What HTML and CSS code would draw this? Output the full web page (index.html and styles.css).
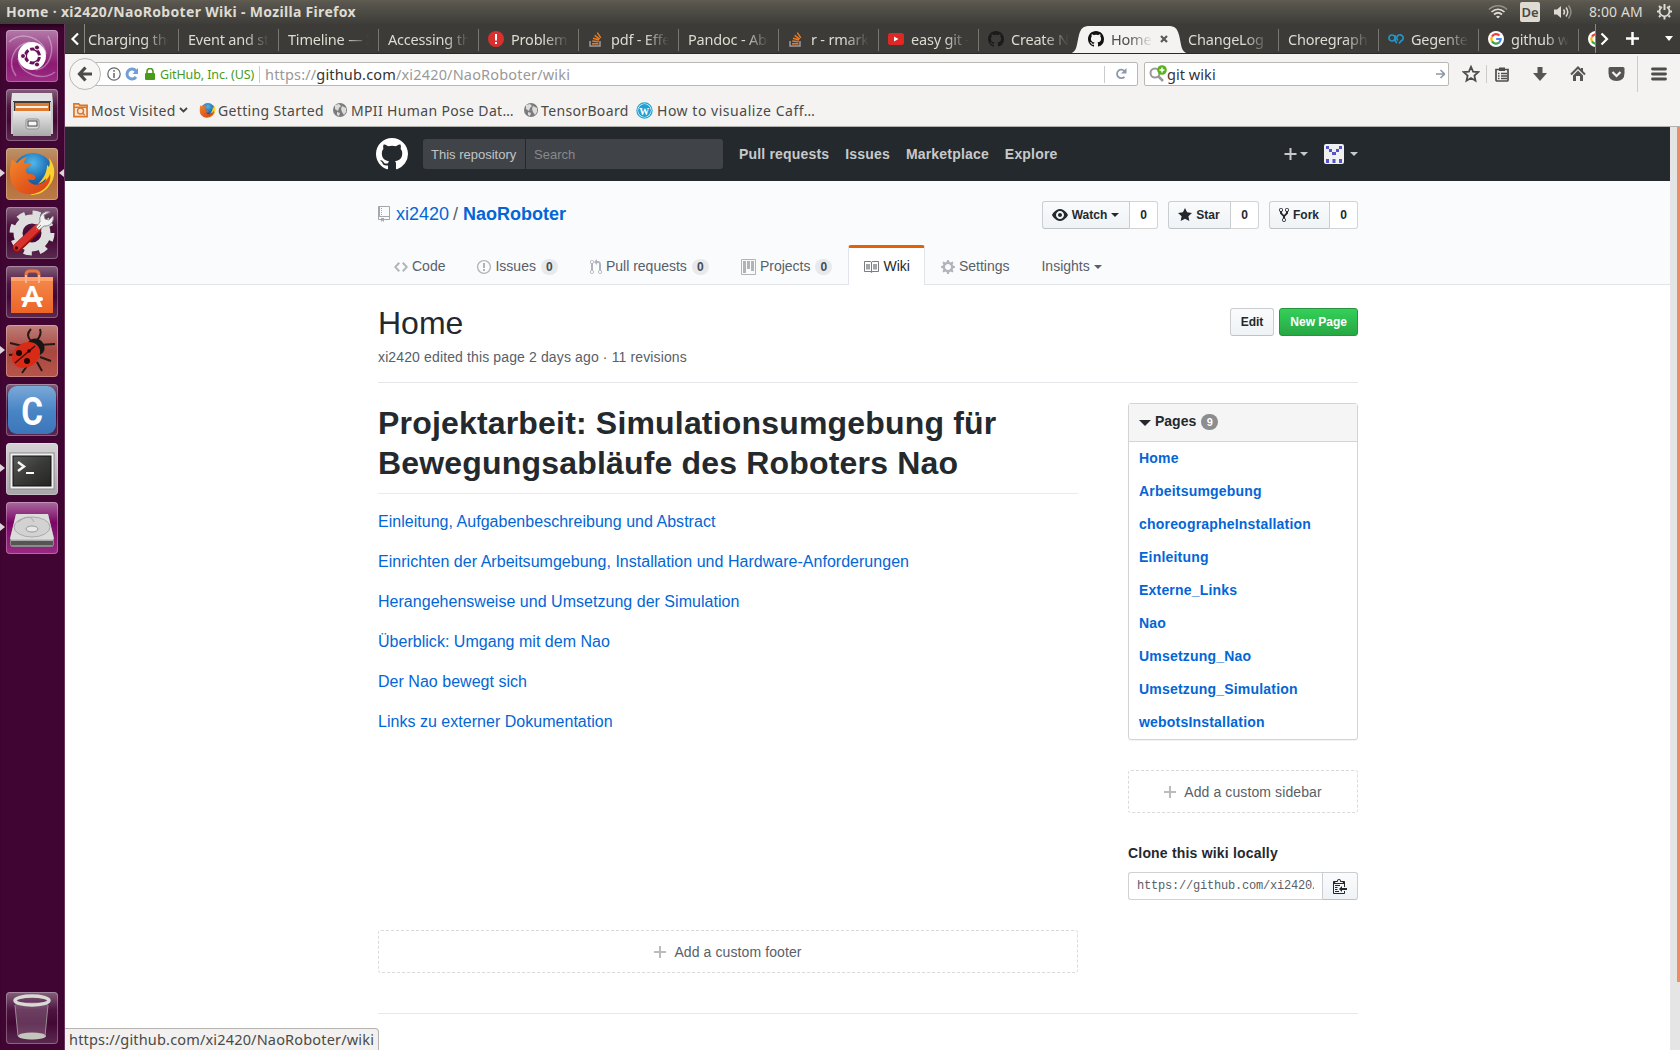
FILE: index.html
```html
<!DOCTYPE html>
<html lang="en">
<head>
<meta charset="utf-8">
<title>Home · xi2420/NaoRoboter Wiki</title>
<link rel="stylesheet" href="styles.css">
</head>
<body>
<svg class="defs" width="0" height="0">
  <defs>
    <linearGradient id="metal" x1="0" y1="0" x2="0" y2="1"><stop offset="0" stop-color="#ececec"/><stop offset="1" stop-color="#a9a9a9"/></linearGradient>
    <linearGradient id="orange" x1="0" y1="0" x2="0" y2="1"><stop offset="0" stop-color="#f58a4e"/><stop offset="1" stop-color="#ec6525"/></linearGradient>
    <linearGradient id="blue" x1="0" y1="0" x2="0" y2="1"><stop offset="0" stop-color="#7ba9d8"/><stop offset=".5" stop-color="#4a86c6"/><stop offset="1" stop-color="#3a76b9"/></linearGradient>
    <linearGradient id="screen" x1="0" y1="0" x2="1" y2="1"><stop offset="0" stop-color="#5a5b58"/><stop offset=".5" stop-color="#3a3b38"/><stop offset="1" stop-color="#242422"/></linearGradient>
    <radialGradient id="globe" cx=".5" cy=".25" r=".7"><stop offset="0" stop-color="#4fb9ea"/><stop offset=".6" stop-color="#1b68b0"/><stop offset="1" stop-color="#153f7c"/></radialGradient>
    <linearGradient id="fox" x1="0" y1="0" x2="1" y2="1"><stop offset="0" stop-color="#f08a2c"/><stop offset=".6" stop-color="#e4571b"/><stop offset="1" stop-color="#d8401a"/></linearGradient>
    <symbol id="octocat" viewBox="0 0 16 16"><path d="M8 0C3.58 0 0 3.58 0 8c0 3.54 2.29 6.53 5.47 7.59.4.07.55-.17.55-.38 0-.19-.01-.82-.01-1.49-2.01.37-2.53-.49-2.69-.94-.09-.23-.48-.94-.82-1.13-.28-.15-.68-.52-.01-.53.63-.01 1.08.58 1.23.82.72 1.21 1.87.87 2.33.66.07-.52.28-.87.51-1.07-1.78-.2-3.64-.89-3.64-3.95 0-.87.31-1.59.82-2.15-.08-.2-.36-1.02.08-2.12 0 0 .67-.21 2.2.82.64-.18 1.32-.27 2-.27.68 0 1.36.09 2 .27 1.53-1.04 2.2-.82 2.2-.82.44 1.1.16 1.92.08 2.12.51.56.82 1.27.82 2.15 0 3.07-1.87 3.75-3.65 3.95.29.25.54.73.54 1.48 0 1.07-.01 1.93-.01 2.2 0 .21.15.46.55.38A8.013 8.013 0 0 0 16 8c0-4.42-3.58-8-8-8z"/></symbol>
    <symbol id="firefox" viewBox="0 0 48 48"><circle cx="25" cy="23" r="20" fill="url(#globe)"/><path d="M41 8c7 8 7 20 0 28-5 7-12 9-19 9 10-4 15-9 16-17-2 3-5 5-8 6 6-6 9-12 9-19l2 2c1-3 1-6 0-9z" fill="#f9d22e"/><path d="M4 9c1 1 3 3 5 4 3-3 7-6 11-6-3 2-4 4-4 6 3 1 6 0 7 1 0 2-5 3-5 6 0 2 1 4 3 4 4 0 8 2 6 5-2 2-5 0-7 1 3 5 9 6 14 3 4-2 7-6 8-9 1 4 0 9-4 13-8 9-24 10-32 0C1 31 1 19 4 9z" fill="url(#fox)"/></symbol>
    <symbol id="stack" viewBox="0 0 16 16"><path d="M2 10v5h10v-5" fill="none" stroke="#9a9b9e" stroke-width="1.500"/><path d="M4 12.700h6.500M4.200 10l6.300.7M5 7.200l6 1.800M6.700 4.300l5 3.800M9.300 1.700l3.500 5.200" stroke="#f0791f" stroke-width="1.500"/></symbol>
    <symbol id="world" viewBox="0 0 16 16"><circle cx="8" cy="8" r="7" fill="#7c7c7c"/><path d="M3 3l4-1 2 2-2 2-1 3-3-2zM10 4l4 2v4l-2 3-2-3-1-3zM5 10l3 1-1 3-2-1z" fill="#dcdcdc"/></symbol>
    <symbol id="google" viewBox="0 0 16 16"><circle cx="8" cy="8" r="8" fill="#fff"/><g fill="none" stroke-width="2.200"><path d="M11.500 4.600A4.700 4.700 0 0 0 4 5.600" stroke="#ea4335"/><path d="M4 5.600a4.700 4.700 0 0 0 0 4.800" stroke="#fbbc05"/><path d="M4 10.400a4.700 4.700 0 0 0 7 1.200" stroke="#34a853"/><path d="M11 11.600A4.700 4.700 0 0 0 12.700 8H8.200" stroke="#4285f4"/></g></symbol>
  </defs>
</svg>

<header class="panel">
  <span class="panel-title">Home · xi2420/NaoRoboter Wiki - Mozilla Firefox</span>
  <div class="indicators">
    <svg class="wifi" width="20" height="16" viewBox="0 0 20 16" fill="none" stroke="#dfdbd2" stroke-width="1.700"><path d="M1 5.500c5-5 13-5 18 0" opacity=".45"/><path d="M3.500 8c4-3.700 9-3.700 13 0M6 10.500c2.500-2.200 5.500-2.200 8 0"/><path d="M8 12.500q2-1.500 4 0l-2 2z" fill="#dfdbd2" stroke="none"/></svg>
    <span class="lang">De</span>
    <svg class="sound" width="20" height="16" viewBox="0 0 20 16" fill="none" stroke="#dfdbd2" stroke-width="1.500"><path d="M1 5.500h3l4-3.500v12l-4-3.500H1z" fill="#dfdbd2" stroke="none"/><path d="M10.500 5.500q2 2.500 0 5M13 3.500q3.500 4.500 0 9"/><path d="M15.500 1.500q5 6.500 0 13" opacity=".45"/></svg>
    <span class="clock">8:00 AM</span>
    <svg class="power" width="17" height="17" viewBox="0 0 17 17" fill="none" stroke="#dfdbd2"><path d="M6 4a5 5 0 1 0 5 0" stroke-width="1.800"/><path d="M8.500 1v6" stroke-width="2"/><path d="M1 8.500h2M14 8.500h2M3 14l1.500-1.500M14 14l-1.500-1.500M8.500 14v2.500M3 3l1.500 1.500M14 3l-1.500 1.500" stroke-width="2"/></svg>
  </div>
</header>

<div class="desktop">
<nav class="launcher">
  <div class="tile dash"><svg viewBox="0 0 52 52"><g fill="none" stroke="#fff" opacity=".35" stroke-width="1.500"><path d="M3 12C16 0 38 8 40 24M49 42C36 52 14 44 12 28M10 46C0 32 8 14 24 12M42 6c8 14 2 32-12 34"/></g><circle cx="26" cy="26" r="14" fill="#fff"/><circle cx="26.500" cy="26" r="7" fill="none" stroke="#6b1157" stroke-width="3" stroke-dasharray="12.700 2" stroke-dashoffset="-1"/><g fill="#6b1157" stroke="#fff"><circle cx="17" cy="26" r="2.500"/><circle cx="31" cy="17.500" r="2.500"/><circle cx="31" cy="34.500" r="2.500"/></g></svg></div>
  <div class="tile glass"><svg viewBox="0 0 52 52"><path d="M6 4h40l1 10H5z" fill="#e2e2e2"/><path d="M7 12h38v14H7z" fill="#3f3b38"/><path d="M9 14h34v8H9z" fill="#e07a33"/><path d="M10 17h32v2H10z" fill="#fff0e2"/><path d="M5 13h3v32H5zM44 13h3v32h-3z" fill="#c8c8c8"/><path d="M7 22h38v25H7z" fill="url(#metal)"/><rect x="20" y="30" width="13" height="10" rx="2" fill="#ddd" stroke="#929292"/><rect x="22" y="32" width="9" height="5" fill="#f6f6f6" stroke="#444"/></svg></div>
  <div class="tile firefox running focused"><svg viewBox="0 0 52 52"><use href="#firefox" x="2" y="2" width="48" height="48"/></svg></div>
  <div class="tile glass"><svg viewBox="0 0 52 52"><circle cx="26" cy="26" r="20" fill="none" stroke="#dedede" stroke-width="5" stroke-dasharray="8 7.700"/><circle cx="26" cy="26" r="14" fill="none" stroke="#dedede" stroke-width="9"/><path d="M11 41L31 22" stroke="#8f1512" stroke-width="9" stroke-linecap="round"/><path d="M11 40L31 21" stroke="#d8302a" stroke-width="7" stroke-linecap="round"/><path d="M30 23l5-5M44 5a8 8 0 0 0-10 10l-4 5 3 3 5-4a8 8 0 0 0 9-10l-4 4-4-1-1-4z" stroke="#8c8c8c" stroke-width="1" fill="#f2f2f2"/><circle cx="10.500" cy="41" r="1.700" fill="#4a0808"/></svg></div>
  <div class="tile glass"><svg viewBox="0 0 52 52"><path d="M20 17V9q0-4 4-4h5q4 0 4 4v8" fill="none" stroke="#e97840" stroke-width="3"/><path d="M5 11h42v36H5z" fill="url(#orange)"/><path d="M5 11h42v4H5z" fill="#ffa26b"/><path d="M20 17V9M33 17V9" stroke="#f7b48f" stroke-width="2"/><text x="26" y="41" class="bag-letter">A</text><path d="M17 33h18" stroke="#fff" stroke-width="4" stroke-linecap="round"/></svg></div>
  <div class="tile bug running"><svg viewBox="0 0 52 52"><g fill="none" stroke="#261815" stroke-width="2"><path d="M4 18q8 2 13 3M3 30l10-1M16 48l5-7M36 46l-5-9M34 32l11 4M33 20l16-1M25 16q-6-6 0-12M31 15q5-5 3-11"/></g><ellipse cx="30" cy="22" rx="9" ry="8" transform="rotate(40 30 22)" fill="#161616"/><ellipse cx="20" cy="30" rx="15" ry="12" transform="rotate(-35 20 30)" fill="#d92a17"/><path d="M9 38L29 21" stroke="#420a05" stroke-width="1.500"/><g fill="#1d0704"><circle cx="13" cy="28" r="3"/><circle cx="21" cy="36" r="3"/><circle cx="23" cy="26" r="1.700"/></g></svg></div>
  <div class="tile glass"><svg viewBox="0 0 52 52"><rect x="2" y="2" width="48" height="48" rx="9" fill="url(#blue)"/><text x="26" y="41" class="c-letter">C</text></svg></div>
  <div class="tile term running"><svg viewBox="0 0 52 52"><rect x="4" y="10" width="44" height="36" fill="#f2f2f2" stroke="#8a8a8a"/><rect x="7" y="13" width="38" height="30" fill="url(#screen)" stroke="#111"/><path d="M12 19l6 4.500-6 4.500" fill="none" stroke="#f4f4f4" stroke-width="2.500"/><path d="M20 30h8" stroke="#fff" stroke-width="2"/></svg></div>
  <div class="tile disk running"><svg viewBox="0 0 52 52"><path d="M10 12h32l6 24v6q0 3-3 3H7q-3 0-3-3v-6z" fill="#8b8b8b"/><path d="M10 12h32l6 25H4z" fill="#dcdcdc"/><path d="M5 38h42v5H5z" fill="#555"/><path d="M5 38h42" stroke="#fff"/><ellipse cx="26" cy="25" rx="18" ry="10" fill="#d2d2d2" stroke="#aaa"/><path d="M12 20q12-10 16 0" fill="none" stroke="#aaa"/><ellipse cx="26" cy="27" rx="6" ry="3" fill="#e8e8e8" stroke="#999"/></svg></div>
  <div class="tile glass trash"><svg viewBox="0 0 52 52"><path d="M9 10l3 35q14 5 27 0l3-35z" fill="#fff" opacity=".18"/><ellipse cx="26" cy="44" rx="14" ry="3.500" fill="#c4c6bd"/><path d="M9 13l3 31M42 13l-3 31" stroke="#9d8b98" stroke-width="1"/><ellipse cx="26" cy="8.500" rx="17" ry="4.500" fill="none" stroke="#d9dad6" stroke-width="3.500"/></svg></div>
</nav>

<main class="window">
  <div class="tabbar">
    <div class="scroll-left"><svg width="10" height="14" viewBox="0 0 10 14"><path d="M8 1.500L2.500 7 8 12.500" fill="none" stroke="#fff" stroke-width="2.200"/></svg></div>
    <div class="tabs">
      <div class="tab first"><span>Charging the</span></div>
      <div class="tab"><span>Event and sta</span></div>
      <div class="tab"><span>Timeline — In</span></div>
      <div class="tab"><span>Accessing the</span></div>
      <div class="tab"><svg width="16" height="16" viewBox="0 0 16 16"><circle cx="8" cy="8" r="8" fill="#d9302f"/><path d="M8 3v6.500M8 11v2" stroke="#fff" stroke-width="2"/></svg><span>Problem</span></div>
      <div class="tab"><svg width="16" height="16"><use href="#stack"/></svg><span>pdf - Effe</span></div>
      <div class="tab"><span>Pandoc - Abo</span></div>
      <div class="tab"><svg width="16" height="16"><use href="#stack"/></svg><span>r - rmarkd</span></div>
      <div class="tab"><svg width="16" height="16" viewBox="0 0 16 16"><rect y="2" width="16" height="12" rx="2.500" fill="#dd2825"/><path d="M6 5.500v5L10.500 8z" fill="#fff"/></svg><span>easy git -</span></div>
      <div class="tab nosep"><svg width="16" height="16" fill="#1b1b1b"><use href="#octocat"/></svg><span>Create N</span></div>
      <div class="tab active"><svg class="tabshape" width="126" height="29" viewBox="0 0 126 29"><path d="M0 29C12 29 10 21 13 10 15 3 17 1 24 1h78c7 0 9 2 11 9 3 11 1 19 13 19z" fill="#f4f3f1"/></svg><svg class="icon" width="16" height="16" fill="#111"><use href="#octocat"/></svg><span>Home</span><svg class="close" width="8" height="8" viewBox="0 0 8 8"><path d="M1 1l6 6M7 1L1 7" stroke="#5a5a58" stroke-width="2.200"/></svg></div>
      <div class="tab after"><span>ChangeLog</span></div>
      <div class="tab"><span>Choregraph</span></div>
      <div class="tab"><svg width="16" height="16" viewBox="0 0 16 16" fill="none" stroke="#2196c9" stroke-width="1.700"><circle cx="4" cy="7" r="3"/><path d="M7 4v4q0 3 2 4M10 9.500a3.200 3.200 0 1 1 3 .5l-2 2.500"/></svg><span>Gegente</span></div>
      <div class="tab"><svg width="16" height="16"><use href="#google"/></svg><span>github w</span></div>
      <div class="tab cut"><svg width="16" height="16"><use href="#google"/></svg></div>
    </div>
    <div class="tab-tools">
      <svg width="9" height="14" viewBox="0 0 9 14"><path d="M1.500 1.500L7 7l-5.500 5.500" fill="none" stroke="#fff" stroke-width="2.200"/></svg>
      <svg width="13" height="13" viewBox="0 0 13 13"><path d="M6.500 0v13M0 6.500h13" stroke="#fff" stroke-width="2.500"/></svg>
      <svg width="8" height="5" viewBox="0 0 8 5"><path d="M0 0h8L4 5z" fill="#fff"/></svg>
    </div>
  </div>

  <div class="navbar">
    <div class="back"><svg width="16" height="16" viewBox="0 0 16 16"><path d="M8.500 1.500L2.500 8l6 6.500M3 8h12" fill="none" stroke="#4a4a48" stroke-width="3.200"/></svg></div>
    <div class="urlbar">
      <svg width="14" height="14" viewBox="0 0 14 14"><circle cx="7" cy="7" r="6.200" fill="none" stroke="#666" stroke-width="1.200"/><path d="M7 6v5M7 3v1.800" stroke="#666" stroke-width="1.500"/></svg>
      <svg class="noscript" width="14" height="14" viewBox="0 0 14 14"><path d="M11 10a5 5 0 1 1 0-6" fill="none" stroke="#6f9fd6" stroke-width="3"/><path d="M13 1v6H7.500z" fill="#6f9fd6"/></svg>
      <svg class="lock" width="10" height="12" viewBox="0 0 10 12"><rect y="5" width="10" height="7" rx="1" fill="#4a9a1c"/><path d="M2 5V3.500a3 3 0 0 1 6 0V5" fill="none" stroke="#4a9a1c" stroke-width="1.600"/></svg>
      <span class="ident">GitHub, Inc. (US)</span>
      <span class="url">https://<b>github.com</b>/xi2420/NaoRoboter/wiki</span>
      <span class="reload"><svg width="12" height="12" viewBox="0 0 12 12"><path d="M9.500 8.800A4.300 4.300 0 1 1 9.500 3" fill="none" stroke="#8d99a8" stroke-width="1.800"/><path d="M11.500 0v5.500H6z" fill="#8d99a8"/></svg></span>
    </div>
    <div class="searchbar">
      <svg width="18" height="18" viewBox="0 0 18 18"><circle cx="6" cy="8" r="4.500" fill="none" stroke="#999" stroke-width="2"/><path d="M9 11l5 5" stroke="#999" stroke-width="2.500"/><circle cx="13" cy="5" r="4.800" fill="#57b31b"/><path d="M13 2.500v5M10.500 5h5" stroke="#fff" stroke-width="1.500"/></svg>
      <span>git wiki</span>
      <svg width="9" height="10" viewBox="0 0 9 10"><path d="M0 5h8M4.500 1l4 4-4 4" fill="none" stroke="#8d99a8" stroke-width="1.600"/></svg>
    </div>
    <div class="toolbar">
      <svg width="18" height="18" viewBox="0 0 18 18"><path d="M9 1.800l2.100 4.800 5.200.5-3.900 3.500 1.100 5.100L9 13l-4.500 2.700 1.100-5.100L1.700 7.100l5.200-.5z" fill="none" stroke="#4d4d4b" stroke-width="1.800"/></svg>
      <i></i>
      <svg width="16" height="16" viewBox="0 0 16 16"><path d="M2 3.500h12V14q0 1-1 1H3q-1 0-1-1z" fill="none" stroke="#4d4d4b" stroke-width="1.700"/><path d="M5 1.500h6V5H5z" fill="#4d4d4b"/><path d="M4 7.500h1.500M7 7.500h6M4 10h1.500M7 10h6M4 12.500h1.500M7 12.500h6" stroke="#4d4d4b" stroke-width="1.300"/></svg>
      <svg width="16" height="16" viewBox="0 0 16 16"><path d="M5.500 1h5v6H15l-7 8-7-8h4.500z" fill="#555553"/></svg>
      <svg width="16" height="16" viewBox="0 0 16 16"><path d="M1 8.500l7-7 7 7" fill="none" stroke="#555553" stroke-width="2"/><path d="M11 2h2v4l-2-2zM3 9.500l5-5 5 5V15h-3v-5H6v5H3z" fill="#555553"/></svg>
      <svg width="17" height="16" viewBox="0 0 17 16"><path d="M2 1h13q1.500 0 1.500 1.500V7q0 8-8 8t-8-8V2.500Q.5 1 2 1z" fill="#555553"/><path d="M4.500 6l4 4 4-4" fill="none" stroke="#f4f3f1" stroke-width="2.200"/></svg>
      <i class="tall"></i>
      <svg width="16" height="14" viewBox="0 0 16 14"><path d="M1.500 2h13M1.500 7h13M1.500 12h13" stroke="#4d4d4b" stroke-width="2.800" stroke-linecap="round"/></svg>
    </div>
  </div>

  <div class="bookmarks">
    <a class="b1"><svg width="15" height="16" viewBox="0 0 16 16" fill="none" stroke="#d9762b"><path d="M1 3V1.500h5L7.500 3H15v12H1z" stroke-width="1.800" fill="#f7e6d5"/><circle cx="8" cy="9" r="3.200" stroke-width="1.500"/><path d="M10 11l2.500 2.500M1 5h14" stroke-width="1.500"/></svg><span>Most Visited</span><svg width="9" height="6" viewBox="0 0 9 6"><path d="M1 1l3.500 3.500L8 1" fill="none" stroke="#444" stroke-width="1.800"/></svg></a>
    <a class="b2"><svg width="17" height="17"><use href="#firefox"/></svg><span>Getting Started</span></a>
    <a class="b3"><svg width="16" height="16"><use href="#world"/></svg><span>MPII Human Pose Dat…</span></a>
    <a class="b4"><svg width="16" height="16"><use href="#world"/></svg><span>TensorBoard</span></a>
    <a class="b5"><svg width="17" height="17" viewBox="0 0 17 17"><circle cx="8.500" cy="8.500" r="7.600" fill="#fff" stroke="#21a0d2" stroke-width="1.200"/><circle cx="8.500" cy="8.500" r="6.400" fill="#21a0d2"/><text x="8.500" y="12.700" class="wp">W</text></svg><span>How to visualize Caff…</span></a>
  </div>

  <div class="viewport">
    <div class="page">
      <div class="gh-header"><div class="container gh-bar">
        <svg width="32" height="32" fill="#fff"><use href="#octocat"/></svg>
        <div class="gh-search"><span>This repository</span><em>Search</em></div>
        <nav><a>Pull requests</a><a>Issues</a><a>Marketplace</a><a>Explore</a></nav>
        <div class="gh-user">
          <svg class="plus" width="13" height="16" viewBox="0 0 13 16"><path d="M6.500 2v12M.5 8h12" stroke="#c8c9ca" stroke-width="2"/></svg><i class="caret"></i>
          <svg class="avatar" width="20" height="20" viewBox="0 0 20 20"><rect width="20" height="20" rx="2" fill="#f0f0f0"/><path d="M2 2h3v3H2zM15 2h3v3h-3zM5 5h3v3H5zM12 5h3v3h-3zM8 8h4v3H8zM2 15h3v4H2zM8.500 15h3v4h-3zM15 15h3v4h-3z" fill="#5254cd"/></svg><i class="caret"></i>
        </div>
      </div></div>

      <div class="repohead">
        <div class="container title-row">
          <h1 class="repo"><svg width="12" height="16" viewBox="0 0 12 16"><path d="M4 9H3V8h1v1zm0-3H3v1h1V6zm0-2H3v1h1V4zm0-2H3v1h1V2zm8-1v12c0 .55-.45 1-1 1H6v2l-1.500-1.500L3 16v-2H1c-.55 0-1-.45-1-1V1c0-.55.45-1 1-1h10c.55 0 1 .45 1 1zm-1 10H1v2h2v-1h3v1h5v-2zm0-10H2v9h9V1z"/></svg><a>xi2420</a><s>/</s><a class="strong">NaoRoboter</a></h1>
          <div class="actions">
            <div class="group"><span class="btn w1"><svg width="16" height="16" viewBox="0 0 16 16"><path d="M8.060 2C3 2 0 8 0 8s3 6 8.060 6C13 14 16 8 16 8s-3-6-7.940-6zM8 12c-2.200 0-4-1.780-4-4 0-2.200 1.800-4 4-4 2.220 0 4 1.800 4 4 0 2.220-1.780 4-4 4zm2-4c0 1.110-.89 2-2 2-1.110 0-2-.89-2-2 0-1.110.89-2 2-2 1.110 0 2 .89 2 2z"/></svg>Watch<i class="caret"></i></span><span class="count">0</span></div>
            <div class="group"><span class="btn w2"><svg width="14" height="16" viewBox="0 0 14 16"><path d="M14 6l-4.900-.64L7 1 4.900 5.360 0 6l3.600 3.260L2.670 14 7 11.670 11.330 14l-.93-4.740z"/></svg>Star</span><span class="count">0</span></div>
            <div class="group"><span class="btn w3"><svg width="10" height="16" viewBox="0 0 10 16"><path d="M8 1a1.993 1.993 0 0 0-1 3.720V6L5 8 3 6V4.720A1.993 1.993 0 0 0 2 1a1.993 1.993 0 0 0-1 3.720V6.500l3 3v1.780A1.993 1.993 0 0 0 5 15a1.993 1.993 0 0 0 1-3.720V9.500l3-3V4.720A1.993 1.993 0 0 0 8 1zM2 4.200C1.340 4.200.8 3.650.8 3c0-.65.55-1.200 1.200-1.200.65 0 1.200.55 1.200 1.200 0 .65-.55 1.200-1.200 1.200zm3 10c-.66 0-1.200-.55-1.200-1.200 0-.65.55-1.200 1.200-1.200.65 0 1.200.55 1.200 1.200 0 .65-.55 1.200-1.200 1.200zm3-10c-.66 0-1.200-.55-1.200-1.200 0-.65.55-1.200 1.200-1.200.65 0 1.200.55 1.200 1.200 0 .65-.55 1.200-1.200 1.200z"/></svg>Fork</span><span class="count">0</span></div>
          </div>
        </div>
        <div class="container reponav">
          <a><svg width="14" height="16" viewBox="0 0 14 16"><path d="M9.500 3L8 4.500 11.500 8 8 11.500 9.500 13 14 8 9.500 3zm-5 0L0 8l4.500 5L6 11.500 2.500 8 6 4.500 4.500 3z"/></svg>Code</a>
          <a><svg width="14" height="16" viewBox="0 0 14 16"><path d="M7 2.300c3.140 0 5.700 2.560 5.700 5.700s-2.560 5.700-5.700 5.700A5.710 5.710 0 0 1 1.300 8c0-3.140 2.560-5.700 5.700-5.700zM7 1C3.140 1 0 4.140 0 8s3.140 7 7 7 7-3.140 7-7-3.140-7-7-7zm1 3H6v5h2V4zm0 6H6v2h2v-2z"/></svg>Issues<b>0</b></a>
          <a><svg width="12" height="16" viewBox="0 0 12 16"><path d="M11 11.280V5c-.03-.78-.34-1.470-.94-2.060C9.460 2.350 8.780 2.030 8 2H7V0L4 3l3 3V4h1c.27.02.48.11.69.31.21.2.3.42.31.69v6.280A1.993 1.993 0 0 0 10 15a1.993 1.993 0 0 0 1-3.720zm-1 2.920c-.66 0-1.200-.55-1.200-1.200 0-.65.55-1.200 1.200-1.200.65 0 1.200.55 1.200 1.200 0 .65-.55 1.200-1.200 1.200zM4 3c0-1.110-.89-2-2-2a1.993 1.993 0 0 0-1 3.720v6.560A1.993 1.993 0 0 0 2 15a1.993 1.993 0 0 0 1-3.720V4.720c.59-.34 1-.98 1-1.720zm-.8 10c0 .66-.55 1.200-1.200 1.200-.65 0-1.200-.55-1.200-1.200 0-.65.55-1.200 1.200-1.200.65 0 1.200.55 1.200 1.200zM2 4.200C1.340 4.200.8 3.650.8 3c0-.65.55-1.200 1.200-1.200.65 0 1.200.55 1.200 1.200 0 .65-.55 1.200-1.200 1.200z"/></svg>Pull requests<b>0</b></a>
          <a><svg width="15" height="16" viewBox="0 0 15 16"><path fill-rule="evenodd" d="M1 0h13a1 1 0 0 1 1 1v14a1 1 0 0 1-1 1H1a1 1 0 0 1-1-1V1a1 1 0 0 1 1-1zM1 1v14h13V1z"/><path d="M10 12h3V2h-3zM6 10h3V2H6zM2 14h3V2H2z"/></svg>Projects<b>0</b></a>
          <a class="selected"><svg width="16" height="16" viewBox="0 0 16 16"><path opacity=".7" d="M3 5h4v5.500H3zM10 5h4v5.500h-4z"/><path d="M16 3v9c0 .55-.45 1-1 1H9.500l-1 1-1-1H2c-.55 0-1-.45-1-1V3c0-.55.45-1 1-1h5.500l1 1 1-1H15c.55 0 1 .45 1 1zm-8 .5L7.500 3H2v9h6V3.500zm7-.5H9.500l-.5.5V12h6V3z"/></svg>Wiki</a>
          <a><svg width="14" height="16" viewBox="0 0 14 16"><path d="M14 8.770v-1.600l-1.940-.64-.45-1.090.88-1.840-1.130-1.130-1.810.91-1.090-.45-.69-1.920h-1.600l-.63 1.940-1.110.45-1.840-.88-1.130 1.130.91 1.810-.45 1.090L0 7.230v1.590l1.940.64.45 1.090-.88 1.840 1.130 1.130 1.810-.91 1.090.45.69 1.920h1.590l.63-1.940 1.110-.45 1.840.88 1.130-1.130-.92-1.810.47-1.090L14 8.750v.02zM7 11c-1.660 0-3-1.340-3-3s1.340-3 3-3 3 1.340 3 3-1.340 3-3 3z"/></svg>Settings</a>
          <a>Insights<i class="caret"></i></a>
        </div>
      </div>

      <div class="container wiki">
        <div class="wiki-head">
          <div><h1>Home</h1><p>xi2420 edited this page 2 days ago · 11 revisions</p></div>
          <div class="wiki-actions"><span class="btn">Edit</span><span class="btn primary">New Page</span></div>
        </div>
        <div class="wiki-cols">
          <div class="wiki-main">
            <article>
              <h1>Projektarbeit: Simulationsumgebung für Bewegungsabläufe des Roboters Nao</h1>
              <p><a>Einleitung, Aufgabenbeschreibung und Abstract</a></p>
              <p><a>Einrichten der Arbeitsumgebung, Installation und Hardware-Anforderungen</a></p>
              <p><a>Herangehensweise und Umsetzung der Simulation</a></p>
              <p><a>Überblick: Umgang mit dem Nao</a></p>
              <p><a>Der Nao bewegt sich</a></p>
              <p><a>Links zu externer Dokumentation</a></p>
            </article>
            <div class="add"><svg width="12" height="16" viewBox="0 0 12 16"><path d="M12 9H7v5H5V9H0V7h5V2h2v5h5z"/></svg>Add a custom footer</div>
          </div>
          <aside>
            <div class="pages">
              <h3><i></i>Pages<b>9</b></h3>
              <ul><li>Home</li><li>Arbeitsumgebung</li><li>choreographeInstallation</li><li>Einleitung</li><li>Externe_Links</li><li>Nao</li><li>Umsetzung_Nao</li><li>Umsetzung_Simulation</li><li>webotsInstallation</li></ul>
            </div>
            <div class="add"><svg width="12" height="16" viewBox="0 0 12 16"><path d="M12 9H7v5H5V9H0V7h5V2h2v5h5z"/></svg>Add a custom sidebar</div>
            <h4>Clone this wiki locally</h4>
            <div class="clone"><span><em>https://github.com/xi2420/NaoRoboter.wiki.git</em></span><div class="btn"><svg width="14" height="16" viewBox="0 0 14 16"><path d="M2 13h4v1H2v-1zm5-6H2v1h5V7zm2 3V8l-3 3 3 3v-2h5v-2H9zM4.500 9H2v1h2.500V9zM2 12h2.500v-1H2v1zm9 1h1v2c-.02.28-.11.52-.3.7-.19.18-.42.28-.7.3H1c-.55 0-1-.45-1-1V4c0-.55.45-1 1-1h3c0-1.110.89-2 2-2 1.110 0 2 .89 2 2h3c.55 0 1 .45 1 1v5h-1V6H1v9h10v-2zM2 5h8c0-.55-.45-1-1-1H8c-.55 0-1-.45-1-1s-.45-1-1-1-1 .45-1 1-.45 1-1 1H3c-.55 0-1 .45-1 1z"/></svg></div></div>
          </aside>
        </div>
        <div class="page-rule"></div>
      </div>
    </div>
    <div class="scrollbar"><div></div></div>
    <div class="status">https://github.com/xi2420/NaoRoboter/wiki</div>
  </div>
</main>
</div>
</body>
</html>
```

FILE: styles.css
```css
* { box-sizing: border-box; }
body { margin: 0; width: 1680px; height: 1050px; overflow: hidden; font-family: "Liberation Sans", Arial, sans-serif; font-size: 14px; line-height: 21px; color: #24292e; background: #fff; }
svg { display: block; flex: none; }
.defs { position: absolute; }
h1, h3, h4, p, ul { margin: 0; padding: 0; font-weight: normal; }
i, em { font-style: normal; }
.panel, .tabbar, .navbar, .bookmarks, .status { font-family: "Noto Sans", "Open Sans", sans-serif; white-space: nowrap; }

/* Top panel */
.panel { height: 24px; display: flex; align-items: center; justify-content: space-between; padding: 0 7px 1px 6px; background: linear-gradient(#615e4f 0, #59574f 2px, #3e3d39); color: #dfdbd2; }
.panel-title { font-weight: 700; font-size: 14px; letter-spacing: .32px; }
.indicators { display: flex; align-items: center; font-size: 14px; }
.lang { width: 20px; height: 20px; margin: 0 13px 0 12px; border-radius: 2px; background: #dfdbd2; color: #4b4a45; font-size: 13px; font-weight: 600; line-height: 20px; text-align: center; }
.clock { width: 54px; margin: 0 13px 0 16px; letter-spacing: .1px; }

/* Launcher */
.desktop { display: flex; height: 1026px; }
.launcher { flex: none; width: 65px; padding: 6px 0 6px 6px; display: flex; flex-direction: column; gap: 7px; background: #400532; border-right: 1px solid #6b3560; box-shadow: inset 0 5px 4px -3px #20021a; }
.tile { position: relative; flex: none; width: 52px; height: 52px; border-radius: 4px; box-shadow: inset 0 0 0 1px rgba(255,255,255,.28); }
.dash { background: linear-gradient(#b27aa8, #8c1a73 65%, #9b2c83); }
.glass { background: linear-gradient(#85607c, #4c143e 35%, #430835 60%, #5b2a50); }
.firefox { background: linear-gradient(#bf9168, #b06a38 50%, #bd7b48); }
.bug { background: linear-gradient(#bd7f7a, #a9473f 50%, #b5554a); }
.term { background: linear-gradient(#d6d3d6, #a9a4a9); }
.disk { background: linear-gradient(#a96a9e, #7c0566 40%, #9a2b84); }
.trash { margin-top: auto; }
.running::before { content: ""; position: absolute; left: -6px; top: 21px; border: 4px solid transparent; border-left: 5px solid #dcd6da; border-right: 0; }
.focused::after { content: ""; position: absolute; left: 53px; top: 21px; border: 4px solid transparent; border-right: 5px solid #dcd6da; border-left: 0; }
.bag-letter, .c-letter { fill: #fff; text-anchor: middle; font: 700 29px Lato, sans-serif; }
.c-letter { font: 700 39px Roboto, sans-serif; transform: scaleX(.85); transform-origin: 26px 0; }

/* Tabs */
.window { flex: 1; min-width: 0; display: flex; flex-direction: column; }
.tabbar { height: 30px; display: flex; background: #3c3b37; color: #dfdbd2; border-bottom: 1px solid #2b2a27; font-size: 14.5px; }
.scroll-left { width: 20px; display: flex; align-items: center; padding-left: 5px; border-right: 1px solid #8a8984; }
.tabs { width: 1511px; display: flex; overflow: hidden; border-right: 1px solid #8a8984; }
.tab { position: relative; flex: none; width: 100px; display: flex; align-items: center; gap: 7px; padding: 0 10px 0 9px; }
.tab::after { content: ""; position: absolute; right: 0; top: 5px; height: 22px; width: 1px; background: #777671; }
.tab.nosep::after, .tab.active::after, .tab.cut::after { display: none; }
.tab.first { width: 94px; padding-left: 3px; }
.tab span { position: relative; flex: 1; min-width: 0; overflow: hidden; line-height: 22px; letter-spacing: -.2px; -webkit-mask-image: linear-gradient(90deg, #000 calc(100% - 24px), transparent); mask-image: linear-gradient(90deg, #000 calc(100% - 24px), transparent); }
.tab.active { color: #4d4d4b; }
.tab.active .tabshape { position: absolute; left: -13px; bottom: -1px; }
.tab.active .icon, .tab.active .close { position: relative; }
.tab.active .close { margin-right: 1px; }
.tab-tools { flex: 1; display: flex; align-items: center; }
.tab-tools svg:nth-child(1) { margin-left: 4px; }
.tab-tools svg:nth-child(2) { margin-left: 17px; }
.tab-tools svg:nth-child(3) { margin-left: 26px; }

/* Navigation toolbar */
.navbar { height: 40px; display: flex; align-items: center; background: #f4f3f1; padding-left: 4px; }
.back { position: relative; z-index: 1; flex: none; width: 32px; height: 32px; display: grid; place-items: center; border: 1px solid #b9b8b4; border-radius: 50%; background: #f7f6f5; }
.urlbar { width: 1049px; height: 24px; margin-left: -12px; padding-left: 17px; display: flex; align-items: center; background: #fff; border: 1px solid #b9b8b4; border-radius: 2px; }
.urlbar .noscript { margin-left: 4px; }
.urlbar .lock { margin-left: 6px; }
.ident { width: 100px; margin-left: 5px; color: #4a9a1c; font-size: 12.5px; letter-spacing: -.12px; border-right: 1px solid #ccc; line-height: 17px; }
.url { flex: 1; margin-left: 5px; color: #999; font-size: 14.5px; letter-spacing: .17px; }
.url b { font-weight: 400; color: #333; }
.reload { width: 33px; height: 17px; display: grid; place-items: center; border-left: 1px solid #ccc; }
.searchbar { width: 305px; height: 24px; margin-left: 6px; padding: 0 3px 0 4px; display: flex; align-items: center; background: #fff; border: 1px solid #b9b8b4; border-radius: 2px; color: #333; font-size: 14.5px; }
.searchbar span { flex: 1; margin-left: 0; letter-spacing: .05px; }
.toolbar { display: flex; align-items: center; margin-left: 13px; }
.toolbar i { width: 1px; height: 18px; margin: 0 7px 0 6px; background: #ccc; }
.toolbar i.tall { height: 36px; margin: 0 13px 0 12px; }
.toolbar svg + svg { margin-left: 22px; }

/* Bookmarks */
.bookmarks { height: 33px; display: flex; background: #f4f3f1; border-bottom: 1px solid #b0b0ac; color: #4a4a48; font-size: 14px; padding-left: 8px; }
.bookmarks a { display: flex; align-items: center; height: 32px; gap: 3px; letter-spacing: .35px; }
.b1 { width: 126px; } .b2 { width: 133px; } .b3 { width: 191px; } .b4 { width: 113px; }
.bookmarks .b2 { gap: 2px; }
.bookmarks .b4 { gap: 2px; }
.bookmarks .b5 { letter-spacing: .53px; gap: 4px; }
.wp { font: 700 10px "Liberation Serif", serif; fill: #fff; text-anchor: middle; }

/* Page */
.viewport { position: relative; flex: 1; min-height: 0; display: flex; }
.page { flex: 1; overflow: hidden; }
.scrollbar { width: 10px; padding-left: 7px; background: #e5e5e5; }
.scrollbar div { height: 855px; background: #f08c64; }
.status { position: absolute; left: 0; bottom: 0; width: 314px; height: 22px; padding-left: 4px; border: 1px solid #b5b4b0; border-width: 1px 1px 0 0; border-radius: 0 4px 0 0; background: #f2f1f0; color: #4a4a48; font-size: 14.5px; line-height: 21px; letter-spacing: .17px; }
.container { width: 980px; margin-left: 313px; }
.caret { display: inline-block; border: 4px solid transparent; border-top-color: currentColor; border-bottom: 0; }

.gh-header { height: 54px; background: #24292e; }
.gh-bar { height: 54px; display: flex; align-items: center; position: relative; left: -2px; width: 982px; }
.gh-search { width: 300px; height: 30px; margin-left: 15px; display: flex; font-size: 13px; line-height: 31px; border-radius: 3px; background: #404448; color: #c3c4c5; }
.gh-search span { width: 103px; padding-left: 8px; border-right: 1px solid #24292e; }
.gh-search em { padding-left: 8px; color: #87898c; }
.gh-bar nav { display: flex; gap: 16px; margin-left: 16px; font-weight: 700; letter-spacing: .18px; color: #c8c9ca; }
.gh-user { display: flex; align-items: center; margin-left: auto; color: #c8c9ca; }
.gh-user .caret { margin-left: 3px; }
.gh-user .avatar { margin: 0 2px 0 16px; }
.gh-user .avatar + .caret { margin-left: 4px; }

.repohead { height: 104px; background: #fafbfc; border-bottom: 1px solid #e1e4e8; }
.title-row { display: flex; justify-content: space-between; padding-top: 20px; height: 64px; }
.repo { display: flex; align-items: center; height: 26px; font-size: 18px; color: #586069; }
.repo svg { fill: #a3a8ad; margin: 0 6px 0 0; }
.repo a { color: #0366d6; }
.repo s { text-decoration: none; margin: 0 5px 0 4px; }
.repo .strong { font-weight: 700; }
.actions { display: flex; gap: 10px; }
.group { display: flex; height: 28px; }
.btn { display: flex; align-items: center; justify-content: center; height: 28px; padding: 0 10px; border: 1px solid #cbcdd0; border-bottom-color: #bfc2c5; border-radius: 3px; background: linear-gradient(#fafbfc, #eff3f6); font-size: 12px; font-weight: 700; color: #24292e; white-space: nowrap; }
.btn svg { fill: #24292e; margin-right: 4px; }
.btn .caret { margin-left: 4px; }
.group .btn { border-radius: 3px 0 0 3px; }
.w1 { width: 88px; } .w2 { width: 63px; } .w3 { width: 61px; }
.group .btn { padding-right: 11px; }
.count { width: 28px; border: 1px solid #d1d3d5; border-left: 0; border-radius: 0 3px 3px 0; background: #fff; font-size: 12px; font-weight: 700; line-height: 26px; text-align: center; }
.reponav { display: flex; height: 40px; }
.reponav a { height: 40px; display: flex; align-items: center; padding: 3px 16px 0 15px; border-left: 1px solid transparent; color: #586069; }
.reponav svg { fill: #586069; opacity: .45; margin-right: 4px; }
.reponav b { width: 17px; height: 16px; margin-left: 5px; border-radius: 9px; background: #e7e9eb; color: #444d56; font-size: 12px; line-height: 16px; text-align: center; }
.reponav .caret { margin-left: 4px; }
.reponav .selected { padding: 0 14px; border: 1px solid #e1e4e8; border-top: 3px solid #e36209; border-bottom: 0; border-radius: 3px 3px 0 0; background: #fff; color: #24292e; }
.reponav .selected svg { fill: #24292e; opacity: .6; }

.wiki-head { display: flex; justify-content: space-between; height: 98px; padding-top: 19px; border-bottom: 1px solid #e5e7ea; }
.wiki-head h1 { font-size: 32px; line-height: 38px; }
.wiki-head p { margin-top: 5px; color: #586069; letter-spacing: .13px; }
.wiki-actions { display: flex; gap: 5px; padding-top: 4px; }
.primary { background: linear-gradient(#34d058, #28a745); border-color: #27933e; color: #fff; }
.wiki-cols { display: flex; justify-content: space-between; margin-top: 20px; }
.wiki-main { width: 700px; }
article { height: 527px; font-size: 16px; line-height: 24px; }
article h1 { padding-bottom: 10px; margin-bottom: 16px; font-size: 32px; line-height: 40px; font-weight: 700; letter-spacing: .18px; border-bottom: 1px solid #eaecef; }
article p { margin-bottom: 16px; letter-spacing: .025px; }
article a { color: #0366d6; }
.add { display: flex; align-items: center; justify-content: center; height: 43px; padding-top: 1px; border: 1px dashed #d8dadc; border-radius: 3px; color: #586069; letter-spacing: .1px; }
.add svg { fill: #bbb; margin-right: 8px; }
aside { width: 230px; }
.pages { height: 337px; margin-bottom: 30px; border: 1px solid #d2d4d7; border-radius: 3px; box-shadow: 0 1px 1px rgba(0,0,0,.05); }
.pages h3 { display: flex; align-items: center; height: 38px; padding: 0 0 2px 10px; border-bottom: 1px solid #d2d4d7; background: #f5f5f5; font-size: 14px; font-weight: 700; }
.pages h3 i { margin: 3px 4px 0 0; border: 6px solid transparent; border-top-color: #24292e; border-bottom: 0; }
.pages h3 b { width: 17px; height: 16px; margin: 1px 0 0 5px; border-radius: 8px; background: #8b8d90; color: #fff; font-size: 11px; line-height: 16px; text-align: center; }
.pages ul { list-style: none; }
.pages li { height: 33px; padding-left: 10px; line-height: 33px; font-weight: 700; letter-spacing: .2px; color: #0366d6; }
aside h4 { margin: 30px 0 8px; font-weight: 700; letter-spacing: .19px; }
.clone { display: flex; }
.clone span { width: 194px; height: 28px; padding: 1px 8px 0; border: 1px solid #cfd2d5; border-right: 0; border-radius: 3px 0 0 3px; font: 12px/25px "Liberation Mono", monospace; letter-spacing: -.2px; color: #586069; }
.clone em { display: block; overflow: hidden; }
.clone .btn { width: 36px; border-radius: 0 3px 3px 0; }
.clone .btn svg { margin: 0; }
.page-rule { margin-top: 40px; border-top: 1px solid #e5e7ea; }
```
